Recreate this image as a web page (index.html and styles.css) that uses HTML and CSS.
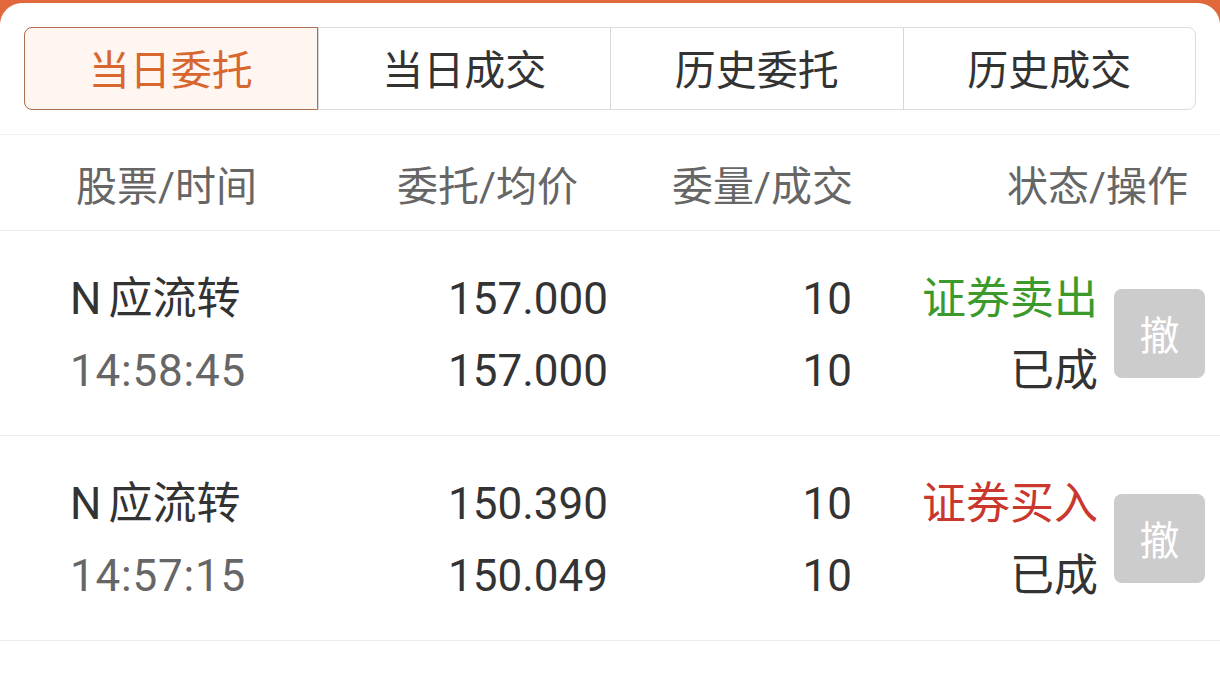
FILE: index.html
```html
<!DOCTYPE html>
<html lang="zh-CN">
<head>
<meta charset="utf-8">
<title>当日委托</title>
<link rel="stylesheet" href="styles.css">
</head>
<body>
<div class="sheet">
  <div class="tabs">
    <div class="tab active">当日委托</div>
    <div class="tab">当日成交</div>
    <div class="tab">历史委托</div>
    <div class="tab">历史成交</div>
  </div>
  <div class="head">
    <div class="c1">股票/时间</div>
    <div class="c2">委托/均价</div>
    <div class="c3">委量/成交</div>
    <div class="c4">状态/操作</div>
  </div>
  <div class="row">
    <div class="cell c1"><div class="l1"><span class="prefix">N</span>应流转</div><div class="l2 time">14:58:45</div></div>
    <div class="cell c2"><div class="l1">157.000</div><div class="l2">157.000</div></div>
    <div class="cell c3"><div class="l1">10</div><div class="l2">10</div></div>
    <div class="cell c4"><div class="l1 sell">证券卖出</div><div class="l2">已成</div></div>
    <div class="btn">撤</div>
  </div>
  <div class="row">
    <div class="cell c1"><div class="l1"><span class="prefix">N</span>应流转</div><div class="l2 time">14:57:15</div></div>
    <div class="cell c2"><div class="l1">150.390</div><div class="l2">150.049</div></div>
    <div class="cell c3"><div class="l1">10</div><div class="l2">10</div></div>
    <div class="cell c4"><div class="l1 buy">证券买入</div><div class="l2">已成</div></div>
    <div class="btn">撤</div>
  </div>
</div>
</body>
</html>
```

FILE: styles.css
```css
html, body {
  margin: 0;
  padding: 0;
  height: 100%;
}
body {
  background: #e0683a;
  font-family: Roboto, "Noto Sans CJK SC", sans-serif;
  color: #333;
  overflow: hidden;
}
.sheet {
  margin-top: 3px;
  background: #fff;
  border-radius: 22px 22px 0 0;
  height: calc(100% - 3px);
  padding-top: 24px;
  box-sizing: border-box;
}
.tabs {
  margin: 0 24px;
  display: grid;
  grid-template-columns: repeat(4, 1fr);
  height: 83px;
  border: 1px solid #dcdcdc;
  border-radius: 8px;
  box-sizing: border-box;
}
.tab {
  display: flex;
  align-items: center;
  justify-content: center;
  font-size: 41px;
  color: #333;
  border-left: 1px solid #d8d8d8;
  padding-bottom: 3px;
}
.tab:first-child {
  border-left: none;
}
.tab.active {
  margin: -1px 0 -1px -1px;
  background: #fff5f1;
  border: 1px solid #a9714f;
  border-radius: 8px 0 0 8px;
  color: #d7662f;
}
.head {
  margin-top: 24px;
  height: 97px;
  border-top: 1px solid #f2f2f2;
  border-bottom: 1px solid #ececec;
  display: grid;
  grid-template-columns: 264px 238px 275px 335px;
  padding-left: 76px;
  align-items: center;
  font-size: 41px;
  color: #666;
  box-sizing: border-box;
}
.head .c2, .head .c3, .head .c4 {
  text-align: right;
}
.row {
  height: 205px;
  border-bottom: 1px solid #ececec;
  display: grid;
  grid-template-columns: 300px 238px 244px 246px 91px;
  padding-left: 70px;
  align-items: center;
  box-sizing: border-box;
  font-size: 44px;
}
.cell {
  line-height: 72px;
  padding-top: 3px;
}
.row .c2, .row .c3, .row .c4 {
  text-align: right;
}
.row .c4 {
  width: 262px;
  padding-right: 16px;
  box-sizing: border-box;
}
.prefix {
  margin-right: 7px;
}
.time {
  color: #666;
  letter-spacing: 0.8px;
}
.sell {
  color: #3c9a2c;
}
.buy {
  color: #c9372d;
}
.btn {
  margin-left: 16px;
  width: 91px;
  height: 89px;
  background: #cccccc;
  border-radius: 8px;
  color: #fff;
  font-size: 40px;
  display: flex;
  align-items: center;
  justify-content: center;
}
```
